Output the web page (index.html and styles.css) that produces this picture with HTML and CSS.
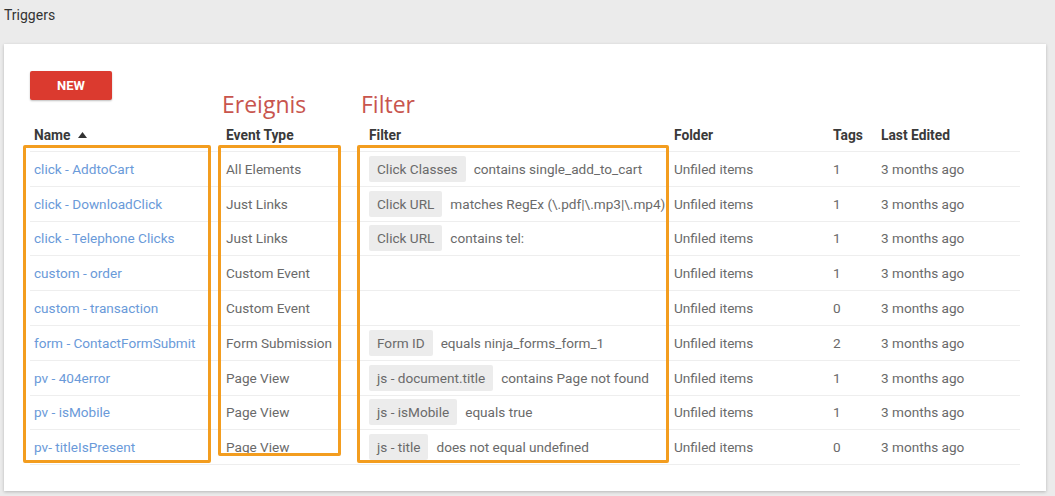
FILE: index.html
```html
<!DOCTYPE html>
<html lang="en">
<head>
  <meta charset="UTF-8" />
  <title>Triggers</title>
  <link rel="stylesheet" href="styles.css">
</head>
<body>
  <h1 class="page-title">Triggers</h1>

  <div class="card">
    <button class="btn-new">NEW</button>

    <!-- annotations drawn over the list -->
    <div class="note note-event">Ereignis</div>
    <div class="note note-filter">Filter</div>
    <div class="mark mark-name"></div>
    <div class="mark mark-event"></div>
    <div class="mark mark-filter"></div>

    <table class="triggers">
      <colgroup>
        <col class="c-name">
        <col class="c-event">
        <col class="c-filter">
        <col class="c-folder">
        <col class="c-tags">
        <col class="c-edited">
      </colgroup>
      <thead>
        <tr>
          <th>Name <svg class="sort" width="9" height="6" viewBox="0 0 9 6"><path d="M0 6 L4.5 0 L9 6 Z" fill="#333"/></svg></th>
          <th>Event Type</th>
          <th>Filter</th>
          <th>Folder</th>
          <th>Tags</th>
          <th>Last Edited</th>
        </tr>
      </thead>
      <tbody>
        <tr>
          <td><a href="#">click - AddtoCart</a></td>
          <td>All Elements</td>
          <td><span class="chip">Click Classes</span>contains single_add_to_cart</td>
          <td>Unfiled items</td>
          <td>1</td>
          <td>3 months ago</td>
        </tr>
        <tr>
          <td><a href="#">click - DownloadClick</a></td>
          <td>Just Links</td>
          <td><span class="chip">Click URL</span>matches RegEx (\.pdf|\.mp3|\.mp4)</td>
          <td>Unfiled items</td>
          <td>1</td>
          <td>3 months ago</td>
        </tr>
        <tr>
          <td><a href="#">click - Telephone Clicks</a></td>
          <td>Just Links</td>
          <td><span class="chip">Click URL</span>contains tel:</td>
          <td>Unfiled items</td>
          <td>1</td>
          <td>3 months ago</td>
        </tr>
        <tr>
          <td><a href="#">custom - order</a></td>
          <td>Custom Event</td>
          <td></td>
          <td>Unfiled items</td>
          <td>1</td>
          <td>3 months ago</td>
        </tr>
        <tr>
          <td><a href="#">custom - transaction</a></td>
          <td>Custom Event</td>
          <td></td>
          <td>Unfiled items</td>
          <td>0</td>
          <td>3 months ago</td>
        </tr>
        <tr>
          <td><a href="#">form - ContactFormSubmit</a></td>
          <td>Form Submission</td>
          <td><span class="chip">Form ID</span>equals ninja_forms_form_1</td>
          <td>Unfiled items</td>
          <td>2</td>
          <td>3 months ago</td>
        </tr>
        <tr>
          <td><a href="#">pv - 404error</a></td>
          <td>Page View</td>
          <td><span class="chip">js - document.title</span>contains Page not found</td>
          <td>Unfiled items</td>
          <td>1</td>
          <td>3 months ago</td>
        </tr>
        <tr>
          <td><a href="#">pv - isMobile</a></td>
          <td>Page View</td>
          <td><span class="chip">js - isMobile</span>equals true</td>
          <td>Unfiled items</td>
          <td>1</td>
          <td>3 months ago</td>
        </tr>
        <tr>
          <td><a href="#">pv- titleIsPresent</a></td>
          <td>Page View</td>
          <td><span class="chip">js - title</span>does not equal undefined</td>
          <td>Unfiled items</td>
          <td>0</td>
          <td>3 months ago</td>
        </tr>
      </tbody>
    </table>
  </div>
</body>
</html>
```

FILE: styles.css
```css
* {
  box-sizing: border-box;
  margin: 0;
  padding: 0;
}

html, body {
  height: 100%;
  overflow: hidden;
}

body {
  background: #ebebeb;
  font-family: Roboto, "Liberation Sans", sans-serif;
  font-size: 13.6px;
  color: #6a6a6a;
  -webkit-font-smoothing: antialiased;
}

.page-title {
  font-size: 14px;
  font-weight: 400;
  color: #333;
  line-height: 18px;
  padding: 6px 4px 20px;
}

.card {
  position: relative;
  margin: 0 9px 0 4px;
  height: 447px;
  padding: 27px 26px 0;
  background: #fff;
  box-shadow: 0 1px 3px rgba(0, 0, 0, 0.22);
}

.btn-new {
  display: block;
  width: 82px;
  height: 29px;
  border: none;
  border-radius: 2px;
  background: #db3a2f;
  color: #fff;
  font-family: Roboto, "Liberation Sans", sans-serif;
  font-size: 13px;
  font-weight: 700;
  box-shadow: 0 1px 2px rgba(0, 0, 0, 0.25);
}

/* handwritten labels and highlight frames */
.note {
  position: absolute;
  top: 49px;
  font-family: "Open Sans", sans-serif;
  font-size: 23px;
  line-height: 1;
  color: #c8554e;
}

.note-event { left: 218px; }
.note-filter { left: 357px; }

.mark {
  position: absolute;
  top: 101px;
  height: 318px;
  border: 3px solid #f39d1f;
  border-radius: 2px;
  z-index: 2;
}

.mark-name { left: 19px; width: 188px; }
.mark-event { left: 214px; width: 123px; height: 311px; }
.mark-filter { left: 353px; width: 312px; }

.triggers {
  width: 990px;
  margin-top: 18px;
  table-layout: fixed;
  border-collapse: separate;
  border-spacing: 0;
}

.c-name { width: 192px; }
.c-event { width: 143px; }
.c-filter { width: 305px; }
.c-folder { width: 159px; }
.c-tags { width: 48px; }
.c-edited { width: 143px; }

.triggers th,
.triggers td {
  text-align: left;
  padding: 0 0 0 4px;
  white-space: nowrap;
  border-bottom: 1px solid #eee;
  vertical-align: middle;
}

.triggers th {
  height: 34px;
  font-size: 13.8px;
  font-weight: 700;
  color: #3a3a3a;
}

.triggers td {
  height: 34.8px;
}

.sort {
  margin-left: 4px;
  vertical-align: 2px;
}

.triggers a {
  color: #6a9ad9;
  text-decoration: none;
}

.chip {
  display: inline-block;
  padding: 4px 8px;
  margin-right: 8px;
  line-height: 18px;
  border-radius: 2px;
  background: #ececec;
  color: #6a6a6a;
}
```
